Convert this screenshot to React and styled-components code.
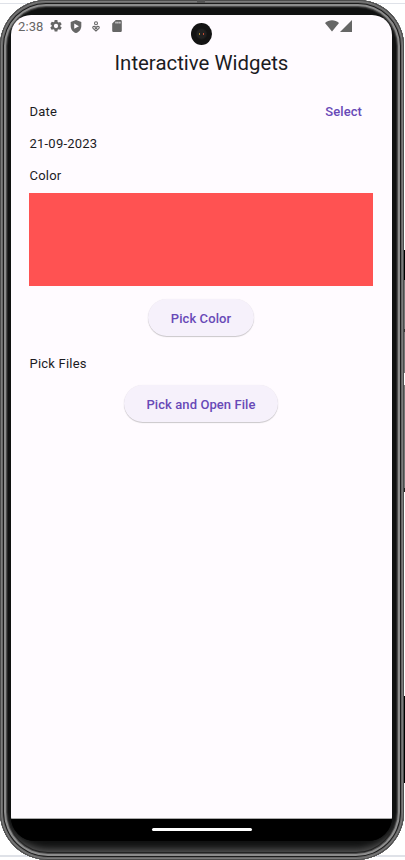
import React from "react";
import styled, { createGlobalStyle } from "styled-components";

const GlobalStyle = createGlobalStyle`
  * { box-sizing: border-box; }
  body { margin: 0; background: #fff; font-family: Roboto, sans-serif; overflow: hidden; }
`;

const Stage = styled.div`
  position: relative;
  width: 405px;
  height: 860px;
  overflow: hidden;
  background: linear-gradient(#fff 3px, #dfe2e8 3px, #dfe2e8 4px, #fff 4px, #fff 855px, #dfe2e8 855px, #dfe2e8 857px, #fff 857px);
`;

const SideKey = styled.div`
  position: absolute;
  left: 403px;
  top: ${(p) => p.$top}px;
  width: 2px;
  height: ${(p) => p.$height}px;
  background: ${(p) => p.$color};
`;

const Device = styled.div`
  position: relative;
  width: 404px;
  height: 860px;
  padding: 15px 12px 19px 11px;
  border-radius: 46px 46px 48px 48px;
  background: #101111;
  box-shadow:
    inset 0 0 0 1px #4c4c4c,
    inset 0 0 0 2px #7c7c7c,
    inset 0 0 0 3px #666,
    inset 0 0 0 4px #1c1c1c,
    inset 0 0 0 6px #8c8c8c,
    inset 0 0 0 7px #4c4c4c,
    inset 0 0 0 8px #242424,
    inset 0 -11px 7px #555;
`;

const TopSeam = styled.div`
  position: absolute;
  left: 197px;
  top: 0;
  width: 8px;
  height: 3px;
  background: #555;
`;

const Screen = styled.div`
  display: flex;
  flex-direction: column;
  width: 381px;
  height: 826px;
  overflow: hidden;
  border-radius: 20px 20px 24px 24px;
  background: linear-gradient(#fffbff 700px, #000 700px);
`;

const StatusBar = styled.header`
  display: grid;
  grid-template-columns: 1fr 22px 1fr;
  height: 33px;
  flex: none;
  color: #666;
`;

const StatusLeft = styled.div`
  display: flex;
  align-items: center;
  height: 22px;
  padding-left: 7px;
`;

const Clock = styled.span`
  width: 32px;
  padding-top: 1px;
  font-size: 13px;
  line-height: 22px;
  letter-spacing: 0.1px;
`;

const StatusIcon = styled.svg`
  display: block;
  flex: none;
  width: ${(p) => p.$w || 13}px;
  height: ${(p) => p.$h || 13}px;
  margin-left: ${(p) => p.$gap || 0}px;
  fill: currentColor;
`;

const StatusRight = styled.div`
  display: flex;
  align-items: center;
  justify-content: flex-end;
  height: 22px;
  padding-right: 40px;
`;

const Camera = styled.div`
  display: flex;
  align-items: center;
  justify-content: center;
  gap: 3px;
  width: 21px;
  height: 22px;
  margin: 8px 0 0 0.5px;
  border-radius: 50%;
  background: radial-gradient(circle, #222 0 4px, #131313 6px);
`;

const Glint = styled.i`
  width: 1px;
  height: 2px;
  background: ${(p) => p.$color};
`;

const Title = styled.h1`
  margin: 0;
  padding-top: 1px;
  color: #1c1b1f;
  font-size: 20.4px;
  font-weight: 400;
  line-height: 28px;
  text-align: center;
`;

const Content = styled.main`
  display: flex;
  flex: 1;
  flex-direction: column;
  padding: 19px 19px 0 18px;
  background: #fffbff;
`;

const Row = styled.div`
  display: flex;
  align-items: center;
  justify-content: space-between;
  height: ${(p) => p.$height}px;
  padding: ${(p) => p.$shift || 0}px 11px 0 0;
`;

const Label = styled.span`
  padding-left: 0.5px;
  color: #1c1b1f;
  font-size: 13px;
  line-height: 18px;
  letter-spacing: 0.22px;
`;

const TextButton = styled.button`
  padding: 0;
  border: 0;
  background: none;
  color: #6849b7;
  font: 500 13px/18px Roboto, sans-serif;
  letter-spacing: 0.08px;
`;

const Swatch = styled.div`
  height: 93px;
  flex: none;
  margin-top: 2px;
  background: #ff5252;
`;

const PillButton = styled(TextButton)`
  align-self: center;
  flex: none;
  width: ${(p) => p.$width}px;
  height: 37px;
  margin-top: ${(p) => p.$top}px;
  padding-top: 2px;
  border-radius: 19px;
  background: #f6f1fb;
  box-shadow: 0 1px 1px rgba(0, 0, 0, 0.2), 0 0 1px rgba(0, 0, 0, 0.08);
`;

const NavBar = styled.footer`
  display: flex;
  justify-content: center;
  flex: none;
  height: 23px;
  padding-top: 9px;
  border-top: 1px solid #aaa;
  background: #000;
`;

const NavHandle = styled.div`
  width: 100px;
  height: 3px;
  border-radius: 2px;
  background: #fff;
`;

const GearIcon = () => (
  <StatusIcon viewBox="2 2 20 20" $w={12} $h={12}>
    <path d="M19.14 12.94c.04-.3.06-.61.06-.94s-.02-.64-.07-.94l2.03-1.58a.49.49 0 0 0 .12-.61l-1.92-3.32a.49.49 0 0 0-.59-.22l-2.39.96a7 7 0 0 0-1.62-.94l-.36-2.54A.48.48 0 0 0 13.92 2h-3.84a.48.48 0 0 0-.48.41l-.36 2.54a7.3 7.3 0 0 0-1.62.94l-2.39-.96a.49.49 0 0 0-.59.22L2.72 8.47a.48.48 0 0 0 .12.61l2.03 1.58a7.5 7.5 0 0 0 0 1.88l-2.03 1.58a.49.49 0 0 0-.12.61l1.92 3.32c.12.22.37.29.59.22l2.39-.96c.5.38 1.03.7 1.62.94l.36 2.54c.05.24.24.41.48.41h3.84c.24 0 .44-.17.48-.41l.36-2.54a7.3 7.3 0 0 0 1.62-.94l2.39.96c.22.08.47 0 .59-.22l1.92-3.32a.48.48 0 0 0-.12-.61zM12 15.6a3.6 3.6 0 1 1 0-7.2 3.6 3.6 0 0 1 0 7.2z" />
  </StatusIcon>
);

const ShieldIcon = () => (
  <StatusIcon viewBox="3 1 18 22" $w={12} $h={13} $gap={8}>
    <path fillRule="evenodd" d="M12 1 3 4.5V11c0 5.6 3.8 10.3 9 12 5.2-1.7 9-6.4 9-12V4.5zM9 7v9l8-4.5z" />
  </StatusIcon>
);

const PersonHeartIcon = () => (
  <StatusIcon viewBox="0 0 8 11" $w={8} $h={11} $gap={10}>
    <g fill="none" stroke="currentColor" strokeWidth="1.1">
      <circle cx="4" cy="2.2" r="1.5" />
      <path d="M4 10 1.1 7.4C-.2 5.7 2.2 4.3 4 6.5c1.8-2.2 4.2-.8 2.9.9z" />
      <path d="m2.7 6.7 1.3 1.2 1.3-1.2" />
    </g>
  </StatusIcon>
);

const CardIcon = () => (
  <StatusIcon viewBox="4 2 16 20" $w={10} $h={12} $gap={12}>
    <path fillRule="evenodd" d="M18 2h-8L4 8v12a2 2 0 0 0 2 2h12a2 2 0 0 0 2-2V4a2 2 0 0 0-2-2zM9.5 5h1.7v3H9.5zm3.2 0h1.7v3h-1.7zM16 5h1.7v3H16z" />
  </StatusIcon>
);

const WifiIcon = () => (
  <StatusIcon viewBox="0 0 14 12" $w={14} $h={12}>
    <path d="M0 3c4-3.8 10-3.8 14 0L7 11.5z" />
  </StatusIcon>
);

const SignalIcon = () => (
  <StatusIcon viewBox="0 0 12 12" $w={12} $h={12} $gap={1}>
    <path d="M12 0v12H0z" />
  </StatusIcon>
);

export default function App() {
  return (
    <>
      <GlobalStyle />
      <Stage>
        <SideKey $top={250} $height={30} $color="#000" />
        <SideKey $top={280} $height={93} $color="#777" />
        <SideKey $top={329} $height={3} $color="#333" />
        <SideKey $top={385} $height={106} $color="#777" />
        <SideKey $top={488} $height={4} $color="#222" />
        <SideKey $top={696} $height={87} $color="#000" />
        <Device>
          <TopSeam />
          <Screen>
            <StatusBar>
              <StatusLeft>
                <Clock>2:38</Clock>
                <GearIcon />
                <ShieldIcon />
                <PersonHeartIcon />
                <CardIcon />
              </StatusLeft>
              <Camera>
                <Glint $color="#a88a35" />
                <Glint $color="#c44b30" />
              </Camera>
              <StatusRight>
                <WifiIcon />
                <SignalIcon />
              </StatusRight>
            </StatusBar>
            <Title>Interactive Widgets</Title>
            <Content>
              <Row $height={31}>
                <Label>Date</Label>
                <TextButton>Select</TextButton>
              </Row>
              <Row $height={32} $shift={1}>
                <Label>21-09-2023</Label>
              </Row>
              <Row $height={32} $shift={2}>
                <Label>Color</Label>
              </Row>
              <Swatch />
              <PillButton $width={106} $top={13}>Pick Color</PillButton>
              <Row $height={54} $shift={2}>
                <Label>Pick Files</Label>
              </Row>
              <PillButton $width={154} $top={-5}>Pick and Open File</PillButton>
            </Content>
            <NavBar>
              <NavHandle />
            </NavBar>
          </Screen>
        </Device>
      </Stage>
    </>
  );
}
